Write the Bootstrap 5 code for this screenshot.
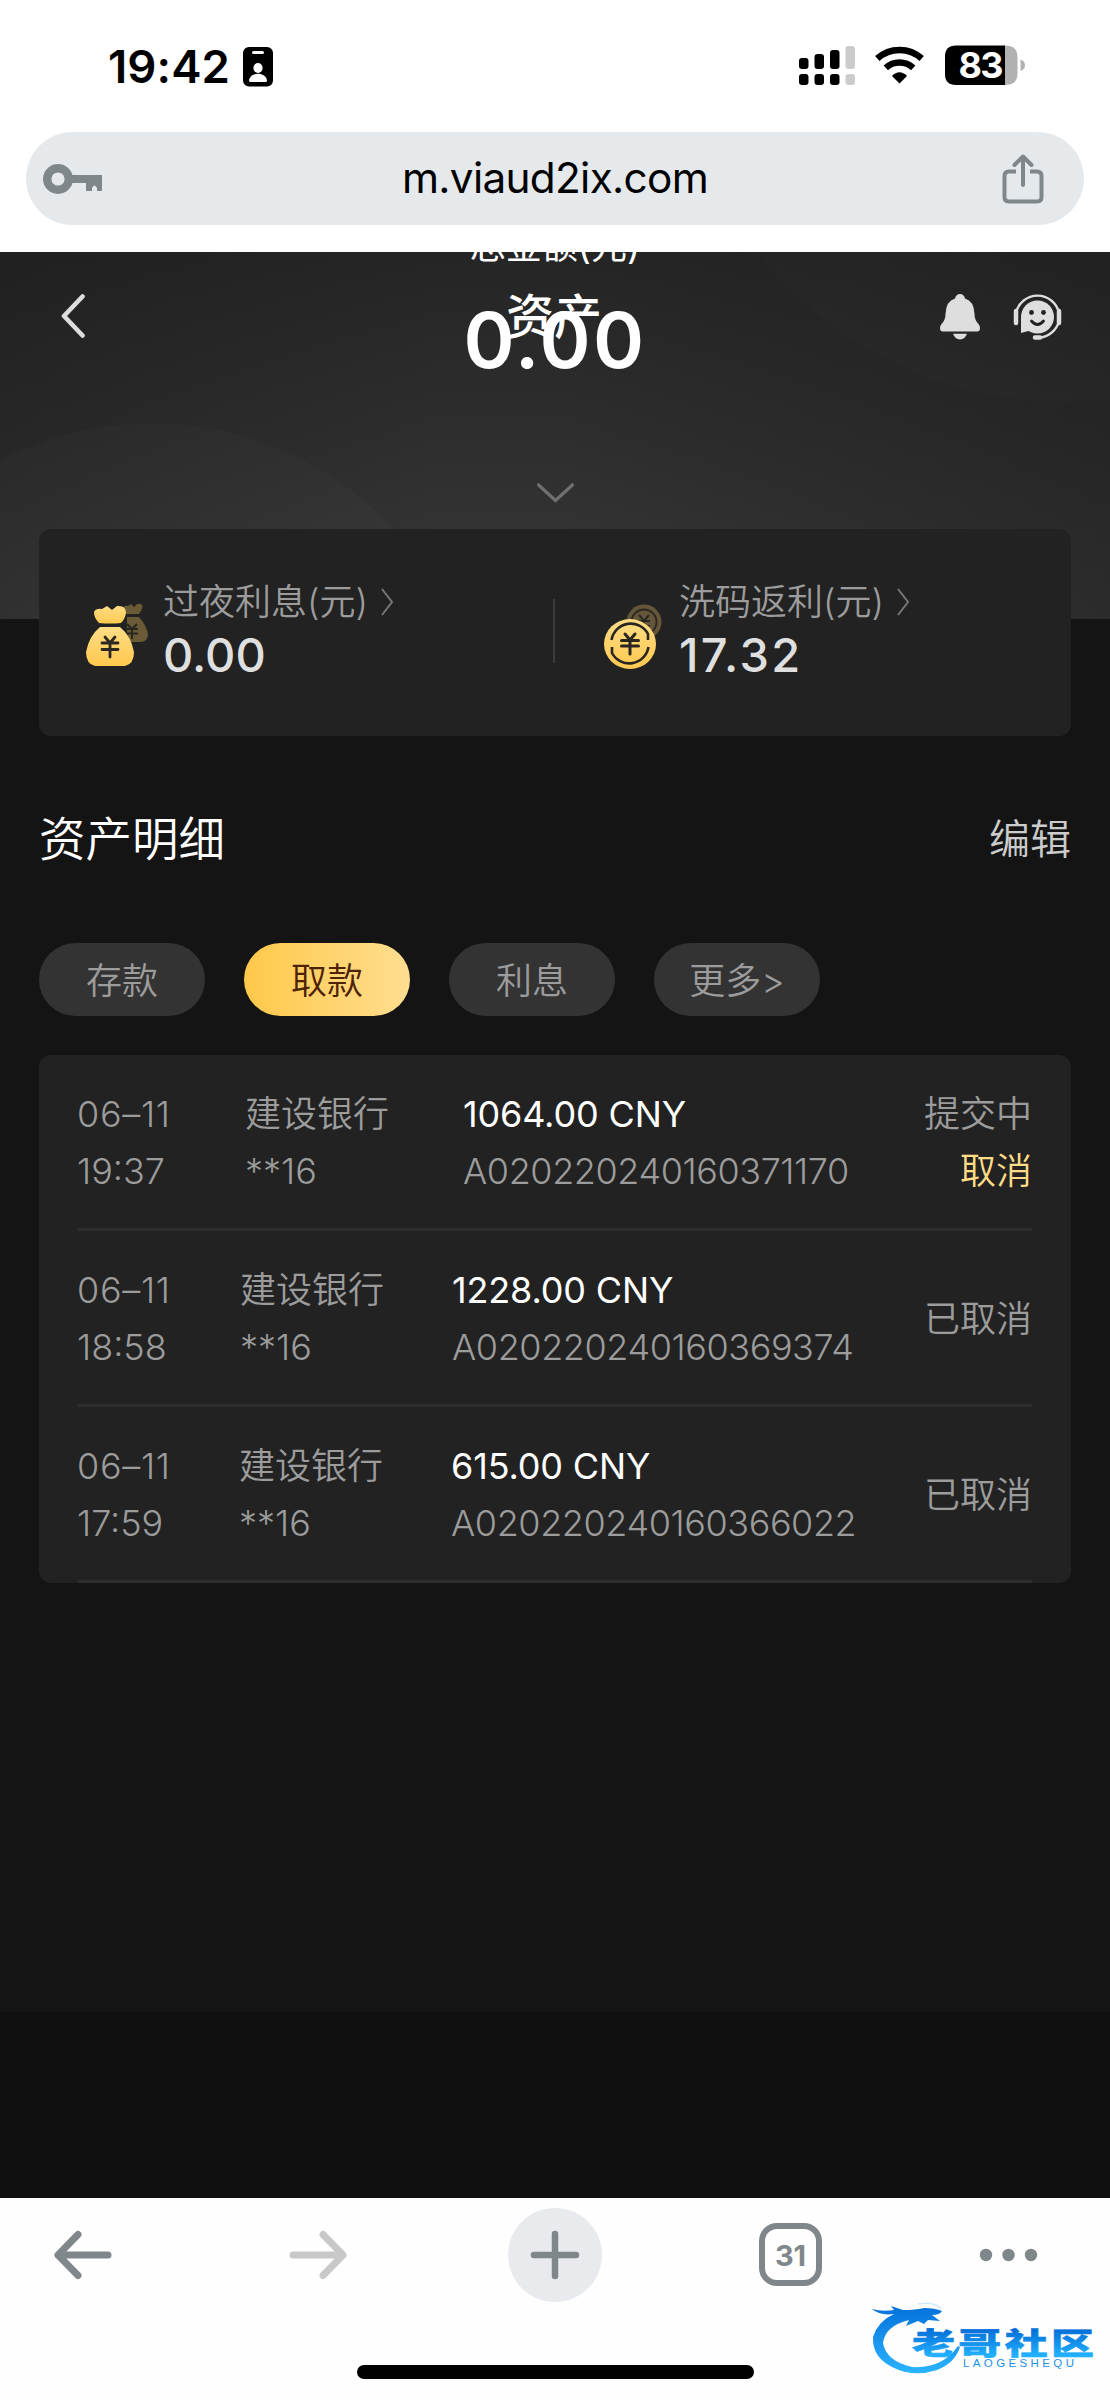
<!DOCTYPE html>
<html lang="zh-CN">
<head>
<meta charset="utf-8">
<meta name="viewport" content="width=device-width, initial-scale=1">
<title>资产</title>
<link href="https://cdn.jsdelivr.net/npm/bootstrap@5.3.0/dist/css/bootstrap.min.css" rel="stylesheet">
<style>
body{font-family:Inter,"Noto Sans CJK SC",sans-serif;background:#141414;width:1110px;height:2400px;overflow:hidden;color:#fff}
svg{display:block;flex:none}
.t-line{line-height:1;white-space:nowrap}
.statusbar{height:132px;padding:45px 84px 0 108px}
.clock{font-size:45.5px;font-weight:600;line-height:43px;color:#000;letter-spacing:.1px}
.id-badge{margin-left:13px}
.browser-top{background:#fff;height:252px}
.address{height:93px;margin:0 26px;border-radius:47px;background:#e5e9ec;color:#000;padding:0 40px 0 17px}
.address .url{font-size:42.3px;letter-spacing:-.7px;line-height:91px;padding-left:5px;padding-bottom:2px}
.hero{height:367px;background:#262626;position:relative;overflow:hidden}
.hero-bg{position:absolute;inset:0}
.hero-nav{position:absolute;left:0;right:0;top:42px;height:46px;padding:0 48px 0 61px}
.hero-title{position:absolute;left:0;right:2px;top:42px;text-align:center;font-size:48px;font-weight:500;line-height:46px}
.total-label{position:absolute;left:0;right:0;top:-24px;text-align:center;font-size:36px;line-height:36px}
.total-num{position:absolute;left:0;right:0;top:48px;text-align:center;font-size:77.5px;font-weight:600;line-height:80px;letter-spacing:2.3px}
.hero-more{position:absolute;left:537px;top:230px}
.panel{background:#222;border-radius:12px;margin:0 39px}
.summary{height:207px;margin-top:-90px;position:relative}
.summary-item{width:50%;padding-top:53px}
.s-label{font-size:36px;line-height:40px;color:#9c9c9c;font-weight:350}
.s-value{font-size:47px;font-weight:500;line-height:50px;color:#dfdfdf;margin-top:8px}
.s-wide{letter-spacing:2.3px}
.v-rule{width:2px;height:64px;background:#3b3b3b;margin-top:70px;margin-left:-2px;flex:none}
.section-head{margin:78px 39px 0 39px;height:50px}
.sec-title{font-size:46.5px;font-weight:350}
.sec-edit{font-size:41px;color:#ccc;font-weight:350}
.pills{margin:79px 39px 39px;gap:39px}
.pill{width:166px;height:73px;border-radius:37px;background:#333;color:#9c9c9c;font-size:36px;font-weight:350;padding:0;border:0;line-height:76px;text-align:center}
.pill.on{background:linear-gradient(90deg,#ffc84a,#ffde90);color:#4d2206}
.rows{padding:0 39px;height:528px}
.rec{height:176px;border-bottom:3px solid #2e2e2e;padding-top:31px;font-size:36px;line-height:57.2px;color:#9c9c9c;display:grid;font-weight:350;white-space:nowrap}
.rec-a{grid-template-columns:167px 218px 1fr auto}
.rec-b{grid-template-columns:162px 212px 1fr auto}
.rec-c{grid-template-columns:161px 212px 1fr auto}
.amt{color:#fff;font-weight:380;letter-spacing:-.15px}
.serial{letter-spacing:-.42px}
.dt{letter-spacing:0;margin-left:-1px}
.day{letter-spacing:.7px}
.single{padding-top:29px}
.gold-text{color:#ffdc85}
.filler{height:429px}
.shade{height:186px;background:#101010}
.toolbar{height:202px;background:#fefefe;position:relative}
.tools{height:113px;padding:0 0 0 53px}
.fwd{margin:0 160px 0 177px}
.plus{width:94px;height:94px;border-radius:50%;background:#e8eaee}
.tabs-n{width:63px;height:63px;border:6px solid #80878a;border-radius:18px;color:#80878a;font-weight:700;font-size:29px;line-height:53px;text-align:center;margin:0 157px}
.home-bar{width:397px;height:14px;border-radius:7px;background:#000;margin:54px auto 0}
.mark-logo{position:absolute;left:870px;top:100px}
</style>
<script src="https://cdn.jsdelivr.net/npm/bootstrap@5.3.0/dist/js/bootstrap.bundle.min.js"></script>
</head>
<body>
<header class="browser-top">
  <div class="statusbar d-flex align-items-start justify-content-between">
    <div class="d-flex align-items-start">
      <span class="clock t-line">19:42</span>
      <svg class="id-badge" width="30" height="42" viewBox="0 0 30 42"><rect y="2" width="30" height="39.500" rx="6"/><rect x="9" y="6" width="12" height="3" rx="1.500" fill="#fff"/><ellipse cx="15" cy="23" rx="4.600" ry="5" fill="#fff"/><path d="M6 35.500C7 26.500 23 26.500 24 35.500Q24 37 22.500 37H7.500Q6 37 6 35.500" fill="#fff"/></svg>
    </div>
    <svg width="228" height="42" viewBox="0 0 228 42"><g><rect x="1" y="13" width="9.500" height="11" rx="3"/><rect x="16.500" y="9" width="9.500" height="15" rx="3"/><rect x="32" y="5" width="9.500" height="19" rx="3"/><rect x="1" y="29" width="9.500" height="11" rx="3"/><rect x="16.500" y="29" width="9.500" height="11" rx="3"/><rect x="32" y="29" width="9.500" height="11" rx="3"/></g><g fill="#cbcbcb"><rect x="47.500" y="1" width="9.500" height="23" rx="3"/><rect x="47.500" y="29" width="9.500" height="11" rx="3"/></g>
    <g fill="none" stroke="#000" stroke-width="6.500"><path d="M79.300 13.500A33 33 0 0 1 123.700 13.500"/><path d="M87.800 22.800A20.500 20.500 0 0 1 115.200 22.800"/></g><path d="M94 31Q101.500 23.500 109 31L101.500 38.500Z"/>
    <path d="M158 .5H207V40H158Q147 40 147 29V11.500Q147 .5 158 .5"/><path d="M207 .5Q219.500 .5 219.500 12V28.500Q219.500 40 207 40Z" fill="#b1b1b1"/><path d="M222.500 14.500Q227 16 227 20.300Q227 24.500 222.500 26Z" fill="#b1b1b1"/><text x="160.500" y="33" font-size="36" font-weight="700" fill="#fff" textLength="45">83</text></svg>
  </div>
  <div class="address d-flex align-items-center justify-content-between">
    <svg width="60" height="34" viewBox="0 0 60 34" fill="#80878a"><circle cx="15" cy="17" r="10.800" fill="none" stroke="#80878a" stroke-width="8.400"/><path d="M28 13H59V29H54V26Q51.500 21 49 26V29H43V21H28Z"/></svg>
    <span class="url t-line">m.viaud2ix.com</span>
    <svg width="42" height="50" viewBox="0 0 42 50" fill="none" stroke="#80878a" stroke-width="4"><path d="M14 17.500H7Q2.500 17.500 2.500 22V43Q2.500 47.500 7 47.500H35Q39.500 47.500 39.500 43V22Q39.500 17.500 35 17.500H28"/><path d="M21 31V2.500M12.500 11L21 2.500L29.500 11" stroke-linecap="round" stroke-linejoin="round"/></svg>
  </div>
</header>

<main>
  <section class="hero">
    <svg class="hero-bg" width="1110" height="367" viewBox="0 0 1110 367"><defs><linearGradient id="hb" x1="0" y1="0" x2="0" y2="1"><stop offset="0" stop-color="#252525"/><stop offset=".5" stop-color="#2e2e2e"/><stop offset="1" stop-color="#383838"/></linearGradient><linearGradient id="hs"><stop offset="0" stop-color="#161616" stop-opacity=".3"/><stop offset=".4" stop-color="#161616" stop-opacity="0"/><stop offset=".5" stop-color="#161616" stop-opacity="0"/><stop offset="1" stop-color="#161616" stop-opacity=".36"/></linearGradient></defs><rect width="1110" height="367" fill="url(#hb)"/><rect width="1110" height="367" fill="url(#hs)"/><circle cx="152" cy="500" r="329" fill="#fff" fill-opacity=".014"/><circle cx="1065" cy="-245" r="395" fill="#fff" fill-opacity=".01"/></svg>
    <div class="total-label t-line">总金额(元)</div>
    <div class="total-num t-line">0.00</div>
    <div class="hero-title t-line">资产</div>
    <div class="hero-nav d-flex align-items-center justify-content-between">
      <svg width="26" height="46" viewBox="0 0 26 46" fill="none" stroke="#ddd" stroke-width="4.600" stroke-linecap="round" stroke-linejoin="round"><path d="M21.500 2.500L3 22L21.500 41.500"/></svg>
      <div class="d-flex">
        <svg width="40" height="46" viewBox="0 0 40 46" fill="#dedede"><path d="M20 0Q24 0 25 4.500Q34 7 34.500 20Q34.500 26 38.500 30Q40 32 40 34Q40 37.500 37 37.500H3Q0 37.500 0 34Q0 32 1.500 30Q5.500 26 5.500 20Q6 7 15 4.500Q16 0 20 0"/><path d="M13 39.800H27Q25 45.500 20 45.500Q15 45.500 13 39.800"/></svg>
        <svg style="margin-left:33px" width="49" height="46" viewBox="0 0 49 46"><circle cx="24.500" cy="23" r="16.500" fill="#dedede"/><path d="M8 22V39L19 36Z" fill="#dedede"/><circle cx="18.500" cy="18.500" r="2.400" fill="#222"/><circle cx="30.500" cy="18.500" r="2.400" fill="#222"/><path d="M18.500 27Q24.500 34 30.500 27" fill="none" stroke="#222" stroke-width="2.800" stroke-linecap="round"/><path d="M3 19A22 22 0 0 1 46 19M46 27A22 22 0 0 1 27 43.500" fill="none" stroke="#dedede" stroke-width="2.400"/><path d="M3 17V29M46 17V29" stroke="#dedede" stroke-width="4.500" stroke-linecap="round"/><path d="M22 43.500H27" stroke="#dedede" stroke-width="4.500" stroke-linecap="round"/></svg>
      </div>
    </div>
    <svg class="hero-more" width="37" height="22" viewBox="0 0 37 22" fill="none" stroke="#707070" stroke-width="3.200"><path d="M.5 2L18.500 18.500L36.500 2"/></svg>
  </section>

  <section class="panel summary d-flex">
    <div class="summary-item d-flex">
      <svg style="margin:21px 14px 0 46px" width="64" height="66" viewBox="0 0 64 66"><defs><linearGradient id="gold" x1="0" y1="0" x2="0" y2="1"><stop offset="0" stop-color="#ffdc85"/><stop offset="1" stop-color="#ffc94f"/></linearGradient></defs><g fill="#6a5a36"><path d="M37 6Q39 2 43 3L46 1L49 4L52 1Q59 0 57 6L54 11H40Z"/><path d="M42 14H54Q62 23 63 32Q62 39 56 39H42Z"/></g><path d="M42 21L47 26L52 21M47 26V36M41 26H53M41 30.500H53" fill="none" stroke="#292621" stroke-width="2"/><g fill="url(#gold)"><path d="M14 20Q9 15 9 9Q11 5 17 6L22 3L27 7L32 3Q41 2 41 10Q40 16 36 20Q25 21 14 20"/><path d="M15 24H35Q46 33 49 49Q49 61 40 63H10Q1 61 1 49Q4 33 15 24"/></g><path d="M20 34L25 40L30 34M25 40V54M17 40H33M17 46.500H33" fill="none" stroke="#2b2721" stroke-width="2.800" stroke-linecap="round"/></svg>
      <div><div class="s-label t-line d-flex align-items-center">过夜利息(元)<svg class="ms-2" width="24" height="28" viewBox="0 0 24 28" fill="none" stroke="#777" stroke-width="2"><path d="M6 1L16 14L6 27"/></svg></div><div class="s-value t-line">0.00</div></div>
    </div>
    <div class="v-rule"></div>
    <div class="summary-item d-flex">
      <svg style="margin:21px 16px 0 48px" width="60" height="66" viewBox="0 0 60 66"><g fill="#65563a"><circle cx="41" cy="19" r="17.500"/></g><circle cx="41" cy="19" r="12.500" fill="none" stroke="#292621" stroke-width="1.800"/><path d="M36 12L41 18L46 12M41 18V27M35 18H47M35 23H47" stroke="#292621" stroke-width="2" fill="none"/><ellipse cx="27" cy="41" rx="26" ry="25" fill="url(#gold)"/><path d="M8.500 37A19.500 19.500 0 0 1 45 31V37M45.500 44A19.500 19.500 0 0 1 9 50V44" fill="none" stroke="#292621" stroke-width="2.600"/><path d="M22 31L27 37L32 31M27 37V51M18.500 37.500H35.500M18.500 43H35.500" fill="none" stroke="#292621" stroke-width="3" stroke-linecap="round"/></svg>
      <div><div class="s-label t-line d-flex align-items-center">洗码返利(元)<svg class="ms-2" width="24" height="28" viewBox="0 0 24 28" fill="none" stroke="#777" stroke-width="2"><path d="M6 1L16 14L6 27"/></svg></div><div class="s-value s-wide t-line">17.32</div></div>
    </div>
  </section>

  <div class="section-head d-flex align-items-center justify-content-between">
    <span class="t-line sec-title">资产明细</span><span class="t-line sec-edit">编辑</span>
  </div>
  <div class="pills d-flex">
    <button class="pill">存款</button><button class="pill on">取款</button><button class="pill">利息</button><button class="pill">更多&gt;</button>
  </div>

  <section class="panel rows">
    <div class="rec rec-a"><div class="dt"><span class="day">06–11</span><br>19:37</div><div>建设银行<br><span>**16</span></div><div><span class="amt">1064.00 CNY</span><br><span class="serial">A020220240160371170</span></div><div class="text-end">提交中<br><span class="gold-text">取消</span></div></div>
    <div class="rec rec-b"><div class="dt"><span class="day">06–11</span><br>18:58</div><div>建设银行<br><span>**16</span></div><div><span class="amt">1228.00 CNY</span><br><span class="serial">A020220240160369374</span></div><div class="single">已取消</div></div>
    <div class="rec rec-c"><div class="dt"><span class="day">06–11</span><br>17:59</div><div>建设银行<br><span>**16</span></div><div><span class="amt">615.00 CNY</span><br><span class="serial">A020220240160366022</span></div><div class="single">已取消</div></div>
  </section>
  <div class="filler"></div>
  <div class="shade"></div>
</main>

<footer class="toolbar">
  <div class="tools d-flex align-items-center">
    <svg width="59" height="50" viewBox="0 0 59 50" fill="none" stroke="#80878a" stroke-width="7" stroke-linecap="round" stroke-linejoin="round"><path d="M55 25H5M25 4.500L5 25L25 45.500"/></svg>
    <svg class="fwd" width="59" height="50" viewBox="0 0 59 50" fill="none" stroke="#c8c8c8" stroke-width="7" stroke-linecap="round" stroke-linejoin="round"><path d="M4 25H54M34 4.500L54 25L34 45.500"/></svg>
    <div class="plus d-flex align-items-center justify-content-center"><svg width="50" height="50" viewBox="0 0 50 50" stroke="#80878a" stroke-width="6.500" stroke-linecap="round"><path d="M25 4V46M4 25H46"/></svg></div>
    <div class="tabs-n">31</div>
    <svg width="59" height="14" viewBox="0 0 59 14" fill="#80878a"><circle cx="7" cy="7" r="6.200"/><circle cx="29.500" cy="7" r="6.200"/><circle cx="52" cy="7" r="6.200"/></svg>
  </div>
  <div class="home-bar"></div>
  <svg class="mark-logo" width="230" height="80" viewBox="0 0 230 80"><defs><linearGradient id="wb" gradientUnits="userSpaceOnUse" x1="0" y1="10" x2="0" y2="76"><stop offset="0" stop-color="#0573dc"/><stop offset="1" stop-color="#2bb5ff"/></linearGradient><linearGradient id="wt" gradientUnits="userSpaceOnUse" x1="0" y1="-34" x2="0" y2="4"><stop offset="0" stop-color="#056fd8"/><stop offset="1" stop-color="#22b2ff"/></linearGradient></defs>
  <path fill="url(#wb)" d="M2 11Q12 14 24 12L21 8L33 12Q45 12 54 10Q65 10 72 13Q70 17 62 17L70 23L58 22L54 26L48 23L36 28L39 22Q15 28 13 45Q16 63 42 69Q72 71 88 48L90 49Q85 65 67 72Q43 80 22 69Q2 59 3 39Q8 23 24 16Q10 18 2 11Z"/>
  <path d="M48 6Q65 3 71 11" fill="none" stroke="#8cc8fa" stroke-opacity=".4" stroke-width="1.500"/>
  <text transform="translate(42 55.500) scale(1 .7)" font-family="Noto Sans CJK SC" font-weight="900" font-size="43" fill="url(#wt)" stroke="url(#wt)" stroke-width=".8" textLength="182">老哥社区</text>
  <text x="93" y="69" font-family="Liberation Sans" font-size="11.500" fill="#1c91ec" textLength="111">LAOGESHEQU</text></svg>
</footer>
</body>
</html>
